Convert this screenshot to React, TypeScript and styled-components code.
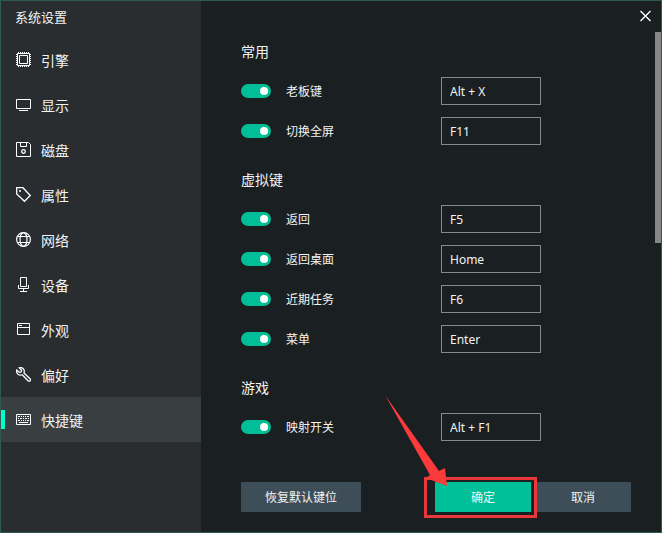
import React, { useState } from "react";
import styled, { createGlobalStyle } from "styled-components";

const GlobalStyle = createGlobalStyle`
  *, *::before, *::after { box-sizing: border-box; }
  html, body, #root { height: 100%; margin: 0; }
  body {
    background: #1a1f21;
    color: #f2f4f4;
    font-family: "Noto Sans", "Noto Sans CJK SC", sans-serif;
    font-size: 12px;
  }
  button, input { font: inherit; color: inherit; }
`;

const Window = styled.div`
  display: flex;
  min-height: 100%;
  border: 1px solid #2e5a50;
`;

const Sidebar = styled.aside`
  flex: 0 0 200px;
  background: #292d2f;
`;

const Title = styled.h1`
  margin: 0;
  padding: 6px 14px 10px;
  font-size: 13px;
  font-weight: 400;
  line-height: 20px;
`;

const NavItem = styled.button<{ $active: boolean }>`
  display: flex;
  align-items: flex-start;
  gap: 9px;
  position: relative;
  width: 100%;
  height: 45px;
  padding: 15px 15px 0;
  border: 0;
  background: ${(p) => (p.$active ? "#393e40" : "transparent")};
  font-size: 14px;
  line-height: 18px;
  text-align: left;
  cursor: pointer;

  &::before {
    content: "";
    display: ${(p) => (p.$active ? "block" : "none")};
    position: absolute;
    left: 0;
    top: 13px;
    width: 4px;
    height: 19px;
    background: #0fc;
  }
`;

const Icon = styled.svg`
  flex: none;
  width: 16px;
  height: 16px;
  fill: none;
  stroke: #fff;
  stroke-width: 1;
`;

const Main = styled.main`
  flex: 1;
  display: flex;
  flex-direction: column;
  min-width: 0;
`;

const TopBar = styled.header`
  display: flex;
  justify-content: flex-end;
  height: 31px;
  padding: 7px 7px 0 0;
`;

const CloseButton = styled.button`
  width: 16px;
  height: 16px;
  padding: 0;
  border: 0;
  background: none;
  cursor: pointer;
`;

const Body = styled.div`
  flex: 1;
  display: flex;
`;

const Groups = styled.div`
  flex: 1;
  display: flex;
  flex-direction: column;
  gap: 8px;
  padding: 0 40px;
`;

const Rail = styled.div`
  flex: 0 0 6px;
`;

const Thumb = styled.div`
  height: 48%;
  background: #858788;
`;

const Heading = styled.h2`
  margin: 0;
  font-size: 14px;
  font-weight: 400;
  line-height: 40px;
`;

const Row = styled.div`
  display: grid;
  grid-template-columns: 30px 140px 100px;
  column-gap: 15px;
  align-items: start;
  height: 40px;
  padding-top: 5px;
`;

const Switch = styled.input`
  appearance: none;
  display: flex;
  align-items: center;
  justify-content: flex-start;
  width: 30px;
  height: 14px;
  margin: 7px 0;
  padding: 0 3px;
  border-radius: 7px;
  background: #4a5357;
  cursor: pointer;

  &::before {
    content: "";
    width: 8px;
    height: 8px;
    border-radius: 50%;
    background: #fff;
  }

  &:checked {
    justify-content: flex-end;
    background: #00bf96;
  }
`;

const RowLabel = styled.label`
  line-height: 30px;
`;

const KeyInput = styled.input`
  width: 100%;
  height: 28px;
  padding: 0 8px;
  border: 1px solid #85898a;
  border-radius: 0;
  background: transparent;
  outline: none;
`;

const Footer = styled.footer`
  display: flex;
  justify-content: space-between;
  padding: 10px 30px 20px 40px;
`;

const Actions = styled.div`
  display: flex;
  gap: 4px;
`;

const Button = styled.button<{ $primary?: boolean; $wide?: boolean }>`
  width: ${(p) => (p.$wide ? 120 : 96)}px;
  height: 30px;
  padding: 0;
  border: 0;
  background: ${(p) => (p.$primary ? "#00c09a" : "#3e4e59")};
  cursor: pointer;
`;

const Highlighted = styled.div`
  position: relative;
  z-index: 1;
`;

const Frame = styled.div`
  position: absolute;
  inset: -5px -6px -6px -11px;
  border: 3px solid #e8383b;
  pointer-events: none;
`;

const Arrow = styled.svg`
  position: absolute;
  left: -51px;
  top: -88px;
  width: 64px;
  height: 94px;
  pointer-events: none;
`;

const navItems = [
  {
    name: "引擎",
    icon: (
      <>
        <path d="M1.5 1.5h12v12h-12zM3.5 3.5h8v8h-8z" />
        <path
          d="M2.5 0v1M4.5 0v1M6.5 0v1M8.5 0v1M10.5 0v1M12.5 0v1M2.5 14v1M4.5 14v1M6.5 14v1M8.5 14v1M10.5 14v1M12.5 14v1M0 2.5h1M0 4.5h1M0 6.5h1M0 8.5h1M0 10.5h1M0 12.5h1M14 2.5h1M14 4.5h1M14 6.5h1M14 8.5h1M14 10.5h1M14 12.5h1"
        />
      </>
    ),
  },
  { name: "显示", icon: <path d="M.5 2.5h14v9H.5zM3 13.5h9" /> },
  {
    name: "磁盘",
    icon: (
      <>
        <path d="M.5.5h12l2 2v12H.5zM4.5.5v4h6v-4" />
        <circle cx="7.5" cy="9.5" r="1.8" strokeWidth="1.3" />
      </>
    ),
  },
  {
    name: "属性",
    icon: (
      <>
        <path d="M.7.7h6.200l7.400 7.800-5.800 5.800L.7 6.900z" strokeWidth="1.300" />
        <circle cx="4" cy="4" r=".7" />
      </>
    ),
  },
  {
    name: "网络",
    icon: (
      <g strokeWidth="1.200">
        <circle cx="7.5" cy="7.5" r="6.900" />
        <ellipse cx="7.5" cy="7.5" rx="3.500" ry="6.900" />
        <path d="M1 4.500h13M1 10.500h13" />
      </g>
    ),
  },
  { name: "设备", icon: <path d="M4.500 .5h6v9h-6zM2.500 8v3.500h10V8M7.500 11.500v3M4 14.500h7" /> },
  { name: "外观", icon: <path d="M1.500 1.500h12v11h-12zM1.500 5.500h12M3 3.500h3" /> },
  {
    name: "偏好",
    icon: (
      <path
        d="M3.200 .8 5.600 3.200 5.100 4.900 3.300 5.400 .8 3C.1 5.300 1.300 7.700 3.900 8.100 4.800 8.200 5.500 8 6.200 7.700L12 13.700C13.500 15.200 15.500 13.300 14 11.800L8 6C8.600 4.300 8.300 2.700 7.100 1.500 6 .5 4.600 .3 3.200 .8z"
        strokeWidth="1.250"
      />
    ),
  },
  {
    name: "快捷键",
    icon: (
      <path d="M.5 2.500h14v10H.5zM2 4.500h2M5 4.500h1M7 4.500h1M9 4.500h1M11 4.500h2M2 6.500h1M4 6.500h2M7 6.500h1M9 6.500h2M12 6.500h1M2 8.500h2M5 8.500h1M7 8.500h1M9 8.500h1M11 8.500h2M3 10.500h9" />
    ),
  },
];

const groups = [
  { title: "常用", rows: [["老板键", "Alt + X"], ["切换全屏", "F11"]] },
  {
    title: "虚拟键",
    rows: [["返回", "F5"], ["返回桌面", "Home"], ["近期任务", "F6"], ["菜单", "Enter"]],
  },
  { title: "游戏", rows: [["映射开关", "Alt + F1"]] },
];

function Shortcut({ id, label, keys }: { id: string; label: string; keys: string }) {
  return (
    <Row>
      <Switch type="checkbox" id={id} defaultChecked />
      <RowLabel htmlFor={id}>{label}</RowLabel>
      <KeyInput aria-label={label} defaultValue={keys} />
    </Row>
  );
}

export default function App() {
  const [active, setActive] = useState("快捷键");
  return (
    <>
      <GlobalStyle />
      <Window>
        <Sidebar>
          <Title>系统设置</Title>
          <nav>
            {navItems.map(({ name, icon }) => (
              <NavItem key={name} $active={name === active} onClick={() => setActive(name)}>
                <Icon viewBox="0 0 16 16" aria-hidden="true">{icon}</Icon>
                {name}
              </NavItem>
            ))}
          </nav>
        </Sidebar>
        <Main>
          <TopBar>
            <CloseButton aria-label="关闭">
              <Icon viewBox="0 0 16 16" aria-hidden="true">
                <path d="M2.500 3 12.500 13M12.500 3 2.500 13" strokeWidth="1.400" />
              </Icon>
            </CloseButton>
          </TopBar>
          <Body>
            <Groups>
              {groups.map((group, g) => (
                <section key={group.title}>
                  <Heading>{group.title}</Heading>
                  {group.rows.map(([label, keys], r) => (
                    <Shortcut key={label} id={`shortcut-${g}-${r}`} label={label} keys={keys} />
                  ))}
                </section>
              ))}
            </Groups>
            <Rail>
              <Thumb />
            </Rail>
          </Body>
          <Footer>
            <Button $wide>恢复默认键位</Button>
            <Actions>
              <Highlighted>
                <Button $primary>确定</Button>
                <Frame />
                <Arrow viewBox="0 0 64 94" aria-hidden="true">
                  <path d="M1 1 55 77 61 74 63 92 42 84 46 81z" fill="#fb3a3c" />
                </Arrow>
              </Highlighted>
              <Button>取消</Button>
            </Actions>
          </Footer>
        </Main>
      </Window>
    </>
  );
}
